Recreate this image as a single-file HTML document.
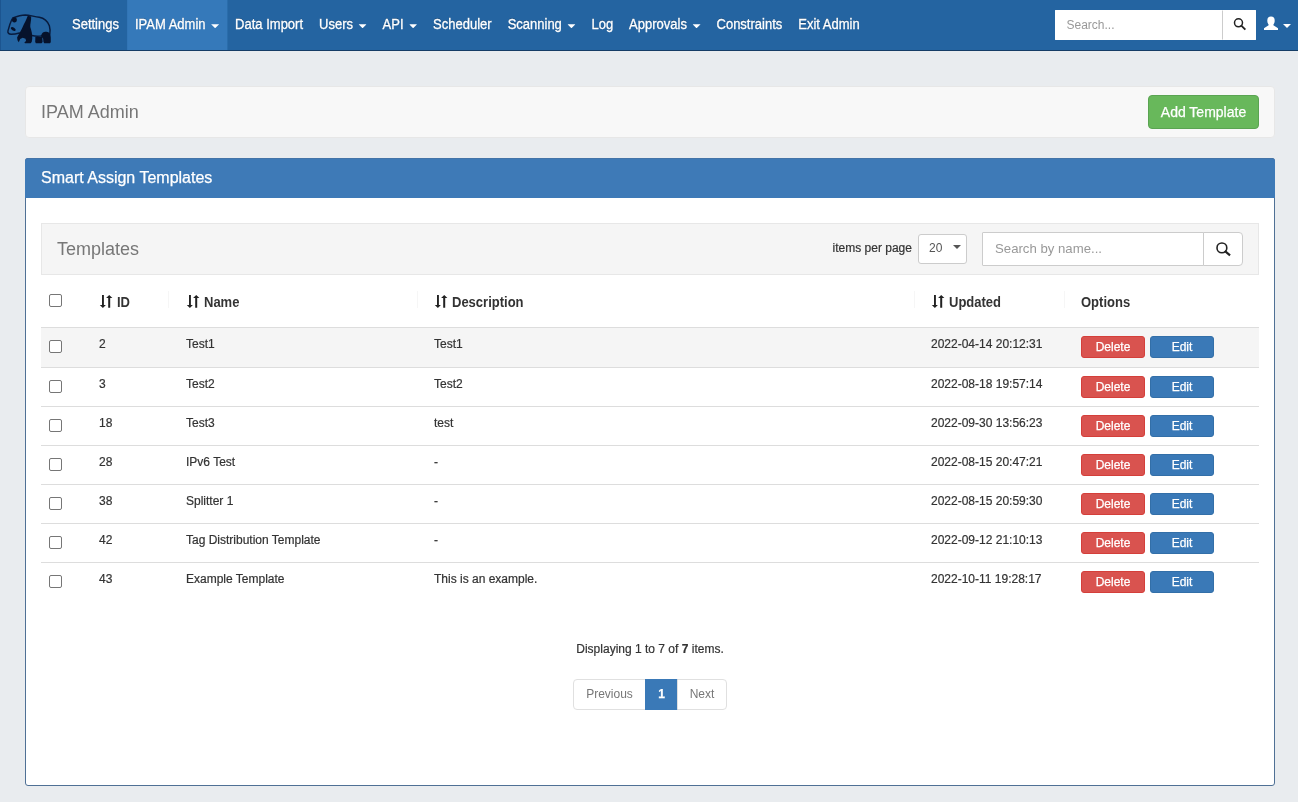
<!DOCTYPE html>
<html lang="en">
<head>
<meta charset="utf-8">
<title>IPAM Admin - Smart Assign Templates</title>
<style>
*{box-sizing:border-box;}
html,body{margin:0;padding:0;}
body{width:1298px;height:802px;overflow:hidden;background:#e9ecef;font-family:"Liberation Sans",Arial,sans-serif;font-size:14px;line-height:20px;color:#333;position:relative;}
a{text-decoration:none;color:inherit;}
svg{display:block;position:absolute;overflow:visible;}
.navbar,.pagehead,.panel{will-change:transform;}
/* navbar */
.navbar{position:absolute;left:0;top:0;width:1298px;height:51px;background:#2464a1;border-bottom:1px solid #163d66;}
.navbar:before{content:"";position:absolute;left:0;top:0;width:1px;height:50px;background:#1c5590;}
.nav{position:absolute;left:64px;top:0;margin:0;padding:0;list-style:none;display:flex;height:50px;transform:scaleX(0.92857);transform-origin:0 0;}
.nav li{display:block;height:50px;}
.nav li a{display:block;height:50px;padding:14px 8.615px 16px;color:#fff;font-size:14px;line-height:20px;white-space:nowrap;text-shadow:0 -1px 0 rgba(0,0,0,.25);-webkit-text-stroke:0.3px #fff;}
.nav li.active a{background:#3579ba;}
.caret{display:inline-block;width:0;height:0;margin-left:2px;vertical-align:middle;border-top:4px solid;border-right:4px solid transparent;border-left:4px solid transparent;}
.nav .caret{margin-left:2.15px;border:0;width:8.62px;height:4px;background:#fff;clip-path:polygon(0 0,100% 0,50% 100%);position:relative;top:1px;}
.nsearch{position:absolute;left:1055px;top:10px;width:201px;height:30px;display:flex;}
.nsearch .inp{width:168px;height:30px;background:#fff;border:1px solid #fff;border-right-color:#ccc;border-radius:1px 0 0 1px;padding:5px 10.5px;font-size:12px;line-height:18px;color:#999;}
.nsearch .btn{width:33px;height:30px;background:#fff;border:1px solid #fff;border-left:0;border-radius:0 1px 1px 0;position:relative;}
.user{position:absolute;left:1264px;top:0;height:50px;width:30px;color:#fff;}
.user .caret{position:absolute;left:19px;top:24px;margin:0;}
/* heading */
.pagehead{position:absolute;left:25px;top:86px;width:1250px;height:52px;background:#f8f8f8;border:1px solid #e7e7e7;border-radius:4px;}
.pagehead .title{position:absolute;left:15px;top:15px;font-size:18px;line-height:20px;color:#777;}
.btn-success{position:absolute;left:1122px;top:8px;width:111px;height:34px;background:#68b85b;border:1px solid #5aa452;border-radius:4px;color:#fff;font-size:14px;line-height:32px;text-align:center;}
/* panel */
.panel{position:absolute;left:25px;top:158px;width:1250px;height:628px;background:#fff;border:1px solid #4f7095;border-radius:3px;}
.panel-heading{position:absolute;left:-1px;top:-1px;width:1250px;height:40px;background:#3e7ab7;border-top:1px solid #4474a8;border-radius:3px 3px 0 0;color:#fff;font-size:16px;line-height:20px;padding:9px 16px 10px;}
.subhead{position:absolute;left:15px;top:64px;width:1218px;height:52px;background:#f5f5f5;border:1px solid #e7e7e7;}
.subhead .title{position:absolute;left:15px;top:15px;font-size:18px;line-height:20px;color:#777;}
.ipp{position:absolute;left:790.6px;top:14px;font-size:12px;line-height:20px;color:#333;}
.sel{position:absolute;left:876px;top:10px;width:49px;height:30px;background:#fff;border:1px solid #ccc;border-radius:3px;font-size:12px;line-height:27px;padding-left:10px;color:#555;}
.sel:after{content:"";position:absolute;right:5px;top:10px;border-top:4px solid #555;border-left:4px solid transparent;border-right:4px solid transparent;}
.sinp{position:absolute;left:940px;top:8px;width:222px;height:34px;background:#fff;border:1px solid #ccc;border-radius:1px 0 0 1px;padding:6px 12px 6px;font-size:13.2px;line-height:20px;color:#999;}
.sbtn{position:absolute;left:1161px;top:8px;width:40px;height:34px;background:#fff;border:1px solid #ccc;border-radius:0 4px 4px 0;}
/* table */
.tbl{position:absolute;left:15px;top:116px;width:1218px;}
.thead{position:relative;height:53px;border-bottom:1px solid #ddd;font-size:14px;font-weight:bold;line-height:17px;color:#333;}
.thead .c span{display:inline-block;transform:scaleX(0.92857);transform-origin:0 0;}
.thead .c{position:absolute;top:19px;white-space:nowrap;}
.thead .c svg{left:0;top:1px;}
.thead .c.s{padding-left:18px;}
.thead i{position:absolute;top:16px;width:1px;height:17px;background:#f6f6f6;}
.row{position:relative;height:39px;border-top:1px solid #ddd;font-size:12px;line-height:17px;color:#333;}
.row.first{border-top:0;height:39px;background:#f5f5f5;}
.row .c{position:absolute;top:8px;white-space:nowrap;}
.cb{position:absolute;left:8px;width:13px;height:13px;border:1px solid #767676;border-radius:2px;background:#fff;}
.thead .cb{top:19px;}
.row .cb{top:12px;}
.c1{left:58px;}.c2{left:145px;}.c3{left:393px;}.c4{left:890px;}.c5{left:1040px;}
.b,.btn-success,.panel-heading,.pag span.act{-webkit-text-stroke:0.25px #fff;}
.row .c,.disp,.ipp{-webkit-text-stroke:0.2px #333;}
.b{position:absolute;top:8px;height:22px;width:64px;border-radius:3px;color:#fff;font-size:12px;line-height:20px;text-align:center;}
.b.del{left:1040px;background:#d9534f;border:1px solid #d43f3a;}
.b.ed{left:1109px;background:#3a79b7;border:1px solid #336fa8;}
.disp{position:absolute;left:0;top:480px;width:1248px;text-align:center;font-size:12px;line-height:20px;}
.pag{position:absolute;left:547px;top:520px;height:31px;display:flex;font-size:12px;}
.pag span{display:block;height:31px;line-height:29px;border:1px solid #e0e0e0;background:#fff;color:#777;text-align:center;margin-left:-1px;}
.pag span.act{background:#3a79b7;border-color:#3a79b7;color:#fff;font-weight:bold;}
.pag span:first-child{border-radius:4px 0 0 4px;margin-left:0;}
.pag span:last-child{border-radius:0 4px 4px 0;}
</style>
</head>
<body>
<div class="navbar">
  <svg width="64" height="45" viewBox="0 0 1141 802" style="left:0;top:5px" aria-hidden="true">
<g fill="none" stroke="#081b3d" stroke-width="26" stroke-linecap="round" stroke-linejoin="round">
<path d="M228 232 C300 205 370 182 450 180 C520 180 600 205 700 218 C790 235 850 290 880 370 C895 420 895 470 888 520"/>
<path d="M215 250 C185 310 160 390 142 460 C132 500 160 520 200 522 C250 522 300 512 345 498"/>
<path d="M570 545 C630 560 690 560 745 550"/>
</g>
<g fill="#06122b">
<ellipse cx="257" cy="264" rx="43" ry="46"/>
<ellipse cx="236" cy="427" rx="48" ry="28" transform="rotate(32 236 427)"/>
<path d="M495 190 L555 205 C560 280 535 340 540 390 C560 450 580 520 575 600 L565 660 L545 682 L445 682 L435 665 L465 640 L455 600 L405 585 L360 605 L335 665 L312 630 L305 580 C330 520 370 470 400 400 C430 330 470 260 495 190 Z"/>
<path d="M630 572 L750 566 L760 660 L740 682 L640 682 L628 660 Z"/>
<path d="M735 560 C735 500 780 475 830 478 C880 482 905 520 905 580 L905 665 L890 682 L790 682 L775 660 L770 600 Z"/>
</g>
</svg>
  <ul class="nav">
    <li><a>Settings</a></li>
    <li class="active"><a>IPAM Admin <span class="caret"></span></a></li>
    <li><a>Data Import</a></li>
    <li><a>Users <span class="caret"></span></a></li>
    <li><a>API <span class="caret"></span></a></li>
    <li><a>Scheduler</a></li>
    <li><a>Scanning <span class="caret"></span></a></li>
    <li><a>Log</a></li>
    <li><a>Approvals <span class="caret"></span></a></li>
    <li><a>Constraints</a></li>
    <li><a>Exit Admin</a></li>
  </ul>
  <div class="nsearch"><div class="inp">Search...</div><div class="btn"><svg width="14" height="14" viewBox="0 0 14 14" style="left:10px;top:6px" aria-hidden="true"><circle cx="5.5" cy="5.8" r="4" fill="none" stroke="#222" stroke-width="1.5"/><path d="M8.5 8.8 L11.7 12" stroke="#222" stroke-width="1.9" fill="none" stroke-linecap="square"/></svg></div></div>
  <div class="user"><svg width="14" height="14" viewBox="0 0 14 14" style="left:0;top:16px" aria-hidden="true"><g fill="#fff"><ellipse cx="7" cy="4.8" rx="3.7" ry="4.2"/><path d="M4.6 7.5 L4.6 9.2 L0 12.3 L0 13.9 L14 13.9 L14 12.3 L9.4 9.2 L9.4 7.5 Z"/></g></svg><span class="caret"></span></div>
</div>
<div class="pagehead"><div class="title">IPAM Admin</div><div class="btn-success">Add Template</div></div>
<div class="panel">
  <div class="panel-heading">Smart Assign Templates</div>
  <div class="subhead">
    <div class="title">Templates</div>
    <div class="ipp">items per page</div>
    <div class="sel">20</div>
    <div class="sinp">Search by name...</div>
    <div class="sbtn"><svg width="16" height="16" viewBox="0 0 16 16" style="left:11px;top:8px" aria-hidden="true"><circle cx="6.9" cy="6.9" r="4.9" fill="none" stroke="#222" stroke-width="1.6"/><path d="M10.6 10.6 L14.2 13.6" stroke="#222" stroke-width="2.2" fill="none" stroke-linecap="square"/></svg></div>
  </div>
  <div class="tbl">
    <div class="thead">
      <span class="cb"></span>
      <i style="left:127px"></i><i style="left:376px"></i><i style="left:873px"></i><i style="left:1023px"></i>
      <div class="c s c1"><svg width="13" height="13" viewBox="0 0 13 13" aria-hidden="true"><g fill="#222"><path d="M3 0 H4.9 V10.1 H6.9 L3.9 13.1 L0.8 10.1 H3 Z"/><path d="M9.2 12.8 H11.2 V2.9 H13.4 L10.2 -0.1 L7.1 2.9 H9.2 Z"/></g></svg><span>ID</span></div>
      <div class="c s c2"><svg width="13" height="13" viewBox="0 0 13 13" aria-hidden="true"><g fill="#222"><path d="M3 0 H4.9 V10.1 H6.9 L3.9 13.1 L0.8 10.1 H3 Z"/><path d="M9.2 12.8 H11.2 V2.9 H13.4 L10.2 -0.1 L7.1 2.9 H9.2 Z"/></g></svg><span>Name</span></div>
      <div class="c s c3"><svg width="13" height="13" viewBox="0 0 13 13" aria-hidden="true"><g fill="#222"><path d="M3 0 H4.9 V10.1 H6.9 L3.9 13.1 L0.8 10.1 H3 Z"/><path d="M9.2 12.8 H11.2 V2.9 H13.4 L10.2 -0.1 L7.1 2.9 H9.2 Z"/></g></svg><span>Description</span></div>
      <div class="c s c4"><svg width="13" height="13" viewBox="0 0 13 13" aria-hidden="true"><g fill="#222"><path d="M3 0 H4.9 V10.1 H6.9 L3.9 13.1 L0.8 10.1 H3 Z"/><path d="M9.2 12.8 H11.2 V2.9 H13.4 L10.2 -0.1 L7.1 2.9 H9.2 Z"/></g></svg><span>Updated</span></div>
      <div class="c c5"><span>Options</span></div>
    </div>
    <div class="row first"><span class="cb"></span><div class="c c1">2</div><div class="c c2">Test1</div><div class="c c3">Test1</div><div class="c c4">2022-04-14 20:12:31</div><span class="b del">Delete</span><span class="b ed">Edit</span></div>
    <div class="row"><span class="cb"></span><div class="c c1">3</div><div class="c c2">Test2</div><div class="c c3">Test2</div><div class="c c4">2022-08-18 19:57:14</div><span class="b del">Delete</span><span class="b ed">Edit</span></div>
    <div class="row"><span class="cb"></span><div class="c c1">18</div><div class="c c2">Test3</div><div class="c c3">test</div><div class="c c4">2022-09-30 13:56:23</div><span class="b del">Delete</span><span class="b ed">Edit</span></div>
    <div class="row"><span class="cb"></span><div class="c c1">28</div><div class="c c2">IPv6 Test</div><div class="c c3">-</div><div class="c c4">2022-08-15 20:47:21</div><span class="b del">Delete</span><span class="b ed">Edit</span></div>
    <div class="row"><span class="cb"></span><div class="c c1">38</div><div class="c c2">Splitter 1</div><div class="c c3">-</div><div class="c c4">2022-08-15 20:59:30</div><span class="b del">Delete</span><span class="b ed">Edit</span></div>
    <div class="row"><span class="cb"></span><div class="c c1">42</div><div class="c c2">Tag Distribution Template</div><div class="c c3">-</div><div class="c c4">2022-09-12 21:10:13</div><span class="b del">Delete</span><span class="b ed">Edit</span></div>
    <div class="row"><span class="cb"></span><div class="c c1">43</div><div class="c c2">Example Template</div><div class="c c3">This is an example.</div><div class="c c4">2022-10-11 19:28:17</div><span class="b del">Delete</span><span class="b ed">Edit</span></div>
  </div>
  <div class="disp">Displaying 1 to 7 of <b>7</b> items.</div>
  <div class="pag"><span style="width:73px">Previous</span><span class="act" style="width:33px">1</span><span style="width:50px">Next</span></div>
</div>
</body>
</html>
